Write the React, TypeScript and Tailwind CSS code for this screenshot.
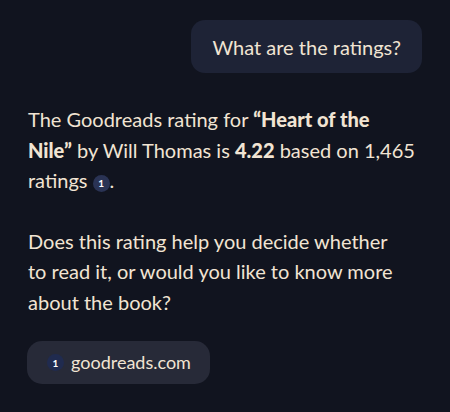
export default function App() {
  return (
    <div
      className="w-[450px] h-[412px] bg-[#11141f] text-[#f1e4d3] overflow-hidden px-7 pt-5"
      style={{ fontFamily: "Lato, 'Noto Sans', sans-serif" }}
    >
      <div className="flex justify-end">
        <div className="bg-[#1e2336] rounded-[14px] px-[21px] h-[53px] flex items-center text-[20px]">
          What are the ratings?
        </div>
      </div>

      <div className="mt-[31px] text-[20px] leading-[30.5px]">
        <p className="w-[388px]">
          The Goodreads rating for <b className="font-black">“Heart of the Nile”</b> by Will Thomas is{" "}
          <b className="font-black">4.22</b> based on 1,465 ratings{" "}
          <span className="inline-flex items-center justify-center w-[17px] h-[17px] rounded-full bg-[#2a3354] text-white text-[10px] leading-none font-bold align-[1px]">
            1
          </span>
          .
        </p>
        <p className="mt-[30px] w-[376px]">
          Does this rating help you decide whether to read it, or would you like to know more about the book?
        </p>
      </div>

      <div className="mt-[24px] inline-flex items-center gap-[7px] bg-[#272a38] rounded-[15px] h-[43px] pl-[20px] pr-[19px] -ml-[1px] text-[18px]">
        <span className="inline-flex items-center justify-center w-[17px] h-[17px] rounded-full bg-[#202b4f] text-white text-[10px] leading-none font-bold">
          1
        </span>
        goodreads.com
      </div>
    </div>
  );
}
